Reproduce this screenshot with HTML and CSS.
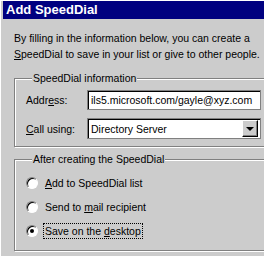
FILE: index.html
```html
<!DOCTYPE html>
<html lang="en">
<head>
  <meta charset="UTF-8" />
  <title>Add SpeedDial</title>
  <link rel="stylesheet" href="styles.css">
</head>
<body>

  <div class="window">
    <div class="titlebar">Add SpeedDial</div>

    <div class="content">
      <p class="intro">By filling in the information below, you can create a<br><u>S</u>peedDial to save in your list or give to other people.</p>

      <fieldset class="group">
        <legend>SpeedDial information</legend>
        <div class="row">
          <label class="label">Addr<u>e</u>ss:</label>
          <div class="field">ils5.microsoft.com/gayle@xyz.com</div>
        </div>
        <div class="row">
          <label class="label"><u>C</u>all using:</label>
          <div class="field select">
            <span>Directory Server</span>
            <span class="drop-btn"><span class="arrow"></span></span>
          </div>
        </div>
      </fieldset>

      <fieldset class="group group-after">
        <legend>After creating the SpeedDial</legend>
        <div class="radio-row">
          <span class="radio"></span>
          <span class="radio-label"><u>A</u>dd to SpeedDial list</span>
        </div>
        <div class="radio-row">
          <span class="radio"></span>
          <span class="radio-label">Send to <u>m</u>ail recipient</span>
        </div>
        <div class="radio-row">
          <span class="radio checked"></span>
          <span class="radio-label focused">Save on the <u>d</u>esktop</span>
        </div>
      </fieldset>
    </div>
  </div>

</body>
</html>
```

FILE: styles.css
```css
* {
  margin: 0;
  padding: 0;
  box-sizing: border-box;
}

body {
  background: #cccccc;
  font-family: "Liberation Sans", Arial, sans-serif;
  font-size: 10.5px;
  color: #000;
  overflow: hidden;
}

.window {
  width: 320px;
  height: 256px;
  background: #cccccc;
  padding: 1px 0 0 3px;
  box-shadow: inset 1px 1px 0 #ffffff;
}

.titlebar {
  height: 18px;
  background: #000080;
  color: #fff;
  font-weight: bold;
  font-size: 13px;
  line-height: 18px;
  padding-left: 3px;
}

.content {
  padding: 11px 0 0 11px;
}

.intro {
  line-height: 16px;
  white-space: nowrap;
}

.group {
  border: 1px solid #808080;
  box-shadow: inset 1px 1px 0 #ffffff, 1px 1px 0 #ffffff;
  margin-top: 10px;
  padding: 0 0 7px 11px;
  width: 300px;
}

.group legend {
  margin-left: 6px;
  padding: 0 1px;
  line-height: 13px;
  background: #cccccc;
}

.row {
  display: flex;
  align-items: center;
  margin-top: 8px;
}

.row:first-of-type {
  margin-top: 5px;
}

.label {
  width: 61px;
}

.field {
  width: 174px;
  height: 20px;
  background: #fff;
  border: 1px solid #808080;
  box-shadow: inset 1px 1px 0 #000000;
  padding: 0 0 0 3px;
  line-height: 18px;
  white-space: nowrap;
  overflow: hidden;
}

.select {
  height: 21px;
  display: flex;
  justify-content: space-between;
  padding-right: 2px;
  padding-top: 1px;
}

.drop-btn {
  width: 16px;
  height: 17px;
  background: #cccccc;
  border: 1px solid;
  border-color: #fff #000 #000 #fff;
  box-shadow: inset -1px -1px 0 #808080;
  display: flex;
  align-items: center;
  justify-content: center;
}

.arrow {
  border-left: 4px solid transparent;
  border-right: 4px solid transparent;
  border-top: 4px solid #000;
}

.group-after {
  margin-top: 6px;
  padding: 5px 0 7px 11px;
}

.radio-row {
  display: flex;
  align-items: center;
  height: 24px;
}

.radio {
  width: 12px;
  height: 12px;
  border-radius: 50%;
  background: #fff;
  border: 1px solid;
  border-color: #808080 #fff #fff #808080;
  box-shadow: inset 1px 1px 0 #000;
  margin-right: 5px;
  display: flex;
  align-items: center;
  justify-content: center;
}

.radio.checked::after {
  content: "";
  width: 4px;
  height: 4px;
  border-radius: 50%;
  background: #000;
}

.radio-label {
  padding: 1px 1px;
  border: 1px solid transparent;
}

.radio-label.focused {
  border: 1px dotted #000;
}
```
